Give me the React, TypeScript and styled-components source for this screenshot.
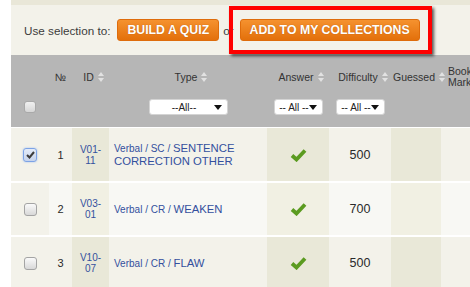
import * as React from 'react';
import styled, { createGlobalStyle } from 'styled-components';

const GlobalStyle = createGlobalStyle`
  html, body {
    margin: 0;
    padding: 0;
    background: #ffffff;
    overflow: hidden;
  }
  body {
    font-family: 'Liberation Sans', Arial, sans-serif;
  }
`;

const COLUMNS = '38px 23px 37px 158px 62px 62px 50px 60px';

type Question = {
  n: number;
  id: string;
  section: string;
  sub: string;
  type: string;
  difficulty: number;
  checked?: boolean;
};

const questions: Question[] = [
  { n: 1, id: 'V01-11', section: 'Verbal', sub: 'SC', type: 'SENTENCE CORRECTION OTHER', difficulty: 500, checked: true },
  { n: 2, id: 'V03-01', section: 'Verbal', sub: 'CR', type: 'WEAKEN', difficulty: 700 },
  { n: 3, id: 'V10-07', section: 'Verbal', sub: 'CR', type: 'FLAW', difficulty: 500 },
];

const SortArrows = () => (
  <ArrowsSvg width="6" height="10" viewBox="0 0 6 10">
    <path d="M3 0 L6 4 L0 4 Z" fill="#e2e2e2" />
    <path d="M0 6 L6 6 L3 10 Z" fill="#e2e2e2" />
  </ArrowsSvg>
);

const GreenCheck = () => (
  <svg width="17" height="14" viewBox="0 0 17 14">
    <path
      d="M2 7.5 L6.5 11.5 L15 2.5"
      fill="none"
      stroke="#5b9b20"
      strokeWidth="3.8"
      strokeLinejoin="miter"
    />
  </svg>
);

const splitId = (id: string) => {
  const [a, b] = id.split('-');
  return (
    <>
      {a}-
      <br />
      {b}
    </>
  );
};

export default function App() {
  return (
    <>
      <GlobalStyle />
      <Page>
        <TopStrip />
        <Toolbar>
          <Hint>Use selection to:</Hint>
          <OrangeButton>BUILD A QUIZ</OrangeButton>
          <Or>or</Or>
          <Highlighted>
            <OrangeButton>ADD TO MY COLLECTIONS</OrangeButton>
            <RedFrame />
          </Highlighted>
        </Toolbar>

        <Header>
          <HeadCell>
            <LabelArea />
            <FilterArea>
              <HeadCheckbox />
            </FilterArea>
          </HeadCell>
          <HeadCell>
            <LabelArea>№</LabelArea>
            <FilterArea />
          </HeadCell>
          <HeadCell>
            <LabelArea $sortable>
              ID
              <SortArrows />
            </LabelArea>
            <FilterArea />
          </HeadCell>
          <HeadCell>
            <LabelArea $sortable>
              Type
              <SortArrows />
            </LabelArea>
            <FilterArea>
              <Dropdown $width={79}>
                <DropText>--All--</DropText>
                <DropArrow />
              </Dropdown>
            </FilterArea>
          </HeadCell>
          <HeadCell>
            <LabelArea $sortable>
              Answer
              <SortArrows />
            </LabelArea>
            <FilterArea>
              <Dropdown $width={49}>
                <DropText>-- All --</DropText>
                <DropArrow />
              </Dropdown>
            </FilterArea>
          </HeadCell>
          <HeadCell>
            <LabelArea $sortable>
              Difficulty
              <SortArrows />
            </LabelArea>
            <FilterArea>
              <Dropdown $width={49}>
                <DropText>-- All --</DropText>
                <DropArrow />
              </Dropdown>
            </FilterArea>
          </HeadCell>
          <HeadCell>
            <LabelArea $sortable>
              Guessed
              <SortArrows />
            </LabelArea>
            <FilterArea />
          </HeadCell>
          <HeadCell>
            <LabelArea $align="flex-start">
              <TwoLine>
                Book
                <br />
                Mark
              </TwoLine>
            </LabelArea>
            <FilterArea />
          </HeadCell>
        </Header>

        <Body>
          {questions.map((q, i) => {
            const even = i % 2 === 1;
            return (
              <Row key={q.n} $height={i === 0 ? 53 : 52}>
                <Cell $bg="#f3f2ea">
                  <RowCheckbox $checked={!!q.checked}>
                    {q.checked && (
                      <svg width="9" height="8" viewBox="0 0 9 8">
                        <path d="M1 4 L3.5 6.5 L8 1" fill="none" stroke="#3c3c3c" strokeWidth="2" />
                      </svg>
                    )}
                  </RowCheckbox>
                </Cell>
                <Cell $bg={even ? '#f8f8f4' : '#f3f2ea'}>
                  <Num>{q.n}</Num>
                </Cell>
                <Cell $bg={even ? '#f1f0e3' : '#e9e8d8'}>
                  <IdText>{splitId(q.id)}</IdText>
                </Cell>
                <TypeCell $bg={even ? '#f8f8f4' : '#f3f2ea'}>
                  <TypeText>
                    <Small>
                      {q.section} / {q.sub} /{' '}
                    </Small>
                    {q.type}
                  </TypeText>
                </TypeCell>
                <Cell $bg={even ? '#f1f0e3' : '#e9e8d8'}>
                  <GreenCheck />
                </Cell>
                <Cell $bg={even ? '#f8f8f4' : '#f3f2ea'}>
                  <Num $size={12.5}>{q.difficulty}</Num>
                </Cell>
                <Cell $bg={even ? '#f1f0e3' : '#e9e8d8'} />
                <Cell $bg={even ? '#f8f8f4' : '#f3f2ea'} />
              </Row>
            );
          })}
        </Body>
      </Page>
    </>
  );
}

const Page = styled.div`
  width: 490px;
  height: 287px;
  margin-left: 11px;
  overflow: hidden;
`;

const TopStrip = styled.div`
  height: 5px;
  background: #e9e7d8;
`;

const Toolbar = styled.div`
  height: 50px;
  background: #f3f2ea;
  display: flex;
  align-items: center;
  padding-left: 13px;
`;

const Hint = styled.span`
  font-size: 11.7px;
  color: #3c3c3c;
  margin-right: 7px;
`;

const OrangeButton = styled.span`
  display: inline-flex;
  align-items: center;
  height: 22px;
  box-sizing: border-box;
  padding: 0 9px;
  border-radius: 3px;
  border: 1px solid #de6c0b;
  background: linear-gradient(#f5922f, #e3700b);
  color: #ffffff;
  font-weight: bold;
  font-size: 12.3px;
  text-shadow: 0 0 1px rgba(140, 60, 0, 0.6);
  white-space: nowrap;
`;

const Or = styled.span`
  font-size: 11.7px;
  color: #3c3c3c;
  margin: 0 6px 0 4px;
`;

const Highlighted = styled.span`
  position: relative;
  display: inline-flex;
`;

const RedFrame = styled.span`
  position: absolute;
  left: -11px;
  right: -12px;
  top: -13px;
  bottom: -13px;
  border: 4px solid #ff0000;
  box-shadow: 2px 2px 3px rgba(0, 0, 0, 0.65);
  pointer-events: none;
`;

const Header = styled.div`
  display: grid;
  grid-template-columns: ${COLUMNS};
  background: #b6b6b6;
  height: 72px;
`;

const HeadCell = styled.div`
  display: flex;
  flex-direction: column;
`;

const LabelArea = styled.div<{ $sortable?: boolean; $align?: string }>`
  height: 44px;
  display: flex;
  align-items: center;
  justify-content: ${p => p.$align ?? 'center'};
  gap: 4px;
  padding-left: ${p => (p.$sortable ? 6 : 0)}px;
  font-size: 10.5px;
  color: #333;
  white-space: nowrap;
`;

const TwoLine = styled.span`
  line-height: 11px;
  text-align: left;
  padding-left: 7px;
  font-size: 10.5px;
`;

const ArrowsSvg = styled.svg`
  flex: none;
`;

const FilterArea = styled.div`
  height: 28px;
  display: flex;
  justify-content: center;
  align-items: flex-start;
`;

const HeadCheckbox = styled.span`
  margin-top: 2px;
  width: 12px;
  height: 12px;
  box-sizing: border-box;
  border: 1px solid #a9a9a9;
  border-radius: 3px;
  background: linear-gradient(#f0f0f0, #d6d6d6);
`;

const Dropdown = styled.div<{ $width: number }>`
  width: ${p => p.$width}px;
  height: 16px;
  box-sizing: border-box;
  background: #ffffff;
  border: 1px solid #d4d4d4;
  border-radius: 3px;
  display: flex;
  align-items: center;
  justify-content: center;
  position: relative;
  padding-right: 8px;
`;

const DropText = styled.span`
  font-size: 10px;
  color: #222;
  white-space: nowrap;
`;

const DropArrow = styled.span`
  position: absolute;
  right: 5px;
  top: 5px;
  width: 0;
  height: 0;
  border-left: 4px solid transparent;
  border-right: 4px solid transparent;
  border-top: 5px solid #111;
`;

const Body = styled.div`
  display: flex;
  flex-direction: column;
  gap: 2px;
  padding-top: 1px;
  background: #ffffff;
`;

const Row = styled.div<{ $height: number }>`
  display: grid;
  grid-template-columns: ${COLUMNS};
  height: ${p => p.$height}px;
`;

const Cell = styled.div<{ $bg: string }>`
  background: ${p => p.$bg};
  display: flex;
  align-items: center;
  justify-content: center;
`;

const TypeCell = styled(Cell)`
  justify-content: flex-start;
  padding-left: 5px;
  padding-right: 4px;
`;

const RowCheckbox = styled.span<{ $checked: boolean }>`
  width: ${p => (p.$checked ? 14 : 13)}px;
  height: ${p => (p.$checked ? 14 : 13)}px;
  box-sizing: border-box;
  border-radius: 3px;
  border: 1px solid ${p => (p.$checked ? '#7ca3e6' : '#a4a4a4')};
  background: ${p =>
    p.$checked ? 'linear-gradient(#e3ebf8, #c5d3ec)' : 'linear-gradient(#fafafa, #d8d8d8)'};
  box-shadow: ${p => (p.$checked ? '0 0 2px #9dbcf0' : 'none')};
  display: flex;
  align-items: center;
  justify-content: center;
`;

const Num = styled.span<{ $size?: number }>`
  font-size: ${p => p.$size ?? 11}px;
  color: #2a2a2a;
`;

const IdText = styled.span`
  font-size: 10px;
  line-height: 11px;
  color: #34509e;
  text-align: center;
`;

const TypeText = styled.span`
  font-size: 11.3px;
  line-height: 13px;
  color: #34509e;
`;

const Small = styled.span`
  font-size: 10px;
`;
